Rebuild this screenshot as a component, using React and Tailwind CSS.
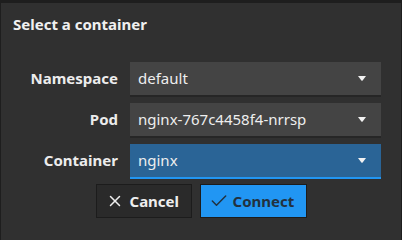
import { X, Check } from 'lucide-react';

const FIELDS = [
    { label: 'Namespace', value: 'default' },
    { label: 'Pod', value: 'nginx-767c4458f4-nrrsp' },
    { label: 'Container', value: 'nginx', active: true },
];

function Caret() {
    return (
        <svg width="8" height="5" viewBox="0 0 8 5" className="shrink-0">
            <path d="M0 0 H8 L4.6 4.4 Q4 5 3.4 4.4 Z" fill="#f2f2f2" />
        </svg>
    );
}

export default function App() {
    return (
        <div className="h-[240px] bg-[#1e1e1e] pl-px pt-[3px] font-['Noto_Sans',sans-serif] overflow-hidden">
            <div className="w-[400px] h-[237px] bg-[#303030] pt-[11px]">
                <h1 className="pl-3 text-[15px] leading-5 font-bold text-[#f0f0f0]">Select a container</h1>

                <div className="mt-[28px] flex flex-col gap-2">
                    {FIELDS.map(f => (
                        <div key={f.label} className="flex items-center">
                            <span className="w-[117px] text-right text-[15px] font-bold text-[#ececec]">{f.label}</span>
                            <div
                                className={`ml-[12px] w-[251px] h-[33px] flex items-center justify-between pl-2 pr-[15px] text-[15px] text-[#eeeeee] ${f.active
                                    ? 'bg-[#2a6496] shadow-[0_2px_0_#2196f3]'
                                    : 'bg-[#444444] shadow-[0_2px_0_#262626]'
                                    }`}
                            >
                                <span>{f.value}</span>
                                <Caret />
                            </div>
                        </div>
                    ))}
                </div>

                <div className="mt-[7px] flex justify-center gap-2">
                    <button className="w-[96px] h-[34px] flex items-center pl-[9px] gap-[6px] bg-[#2a2a2a] border border-[#1c1c1c] text-[15px] font-bold text-[#eeeeee]">
                        <X size={18} strokeWidth={2} />
                        <span>Cancel</span>
                    </button>
                    <button className="w-[107px] h-[34px] flex items-center pl-[8px] gap-[4px] bg-[#2196f3] border border-[#1c1c1c] text-[15px] font-bold text-[#22313f]">
                        <Check size={20} strokeWidth={1.8} />
                        <span>Connect</span>
                    </button>
                </div>
            </div>
        </div>
    );
}
